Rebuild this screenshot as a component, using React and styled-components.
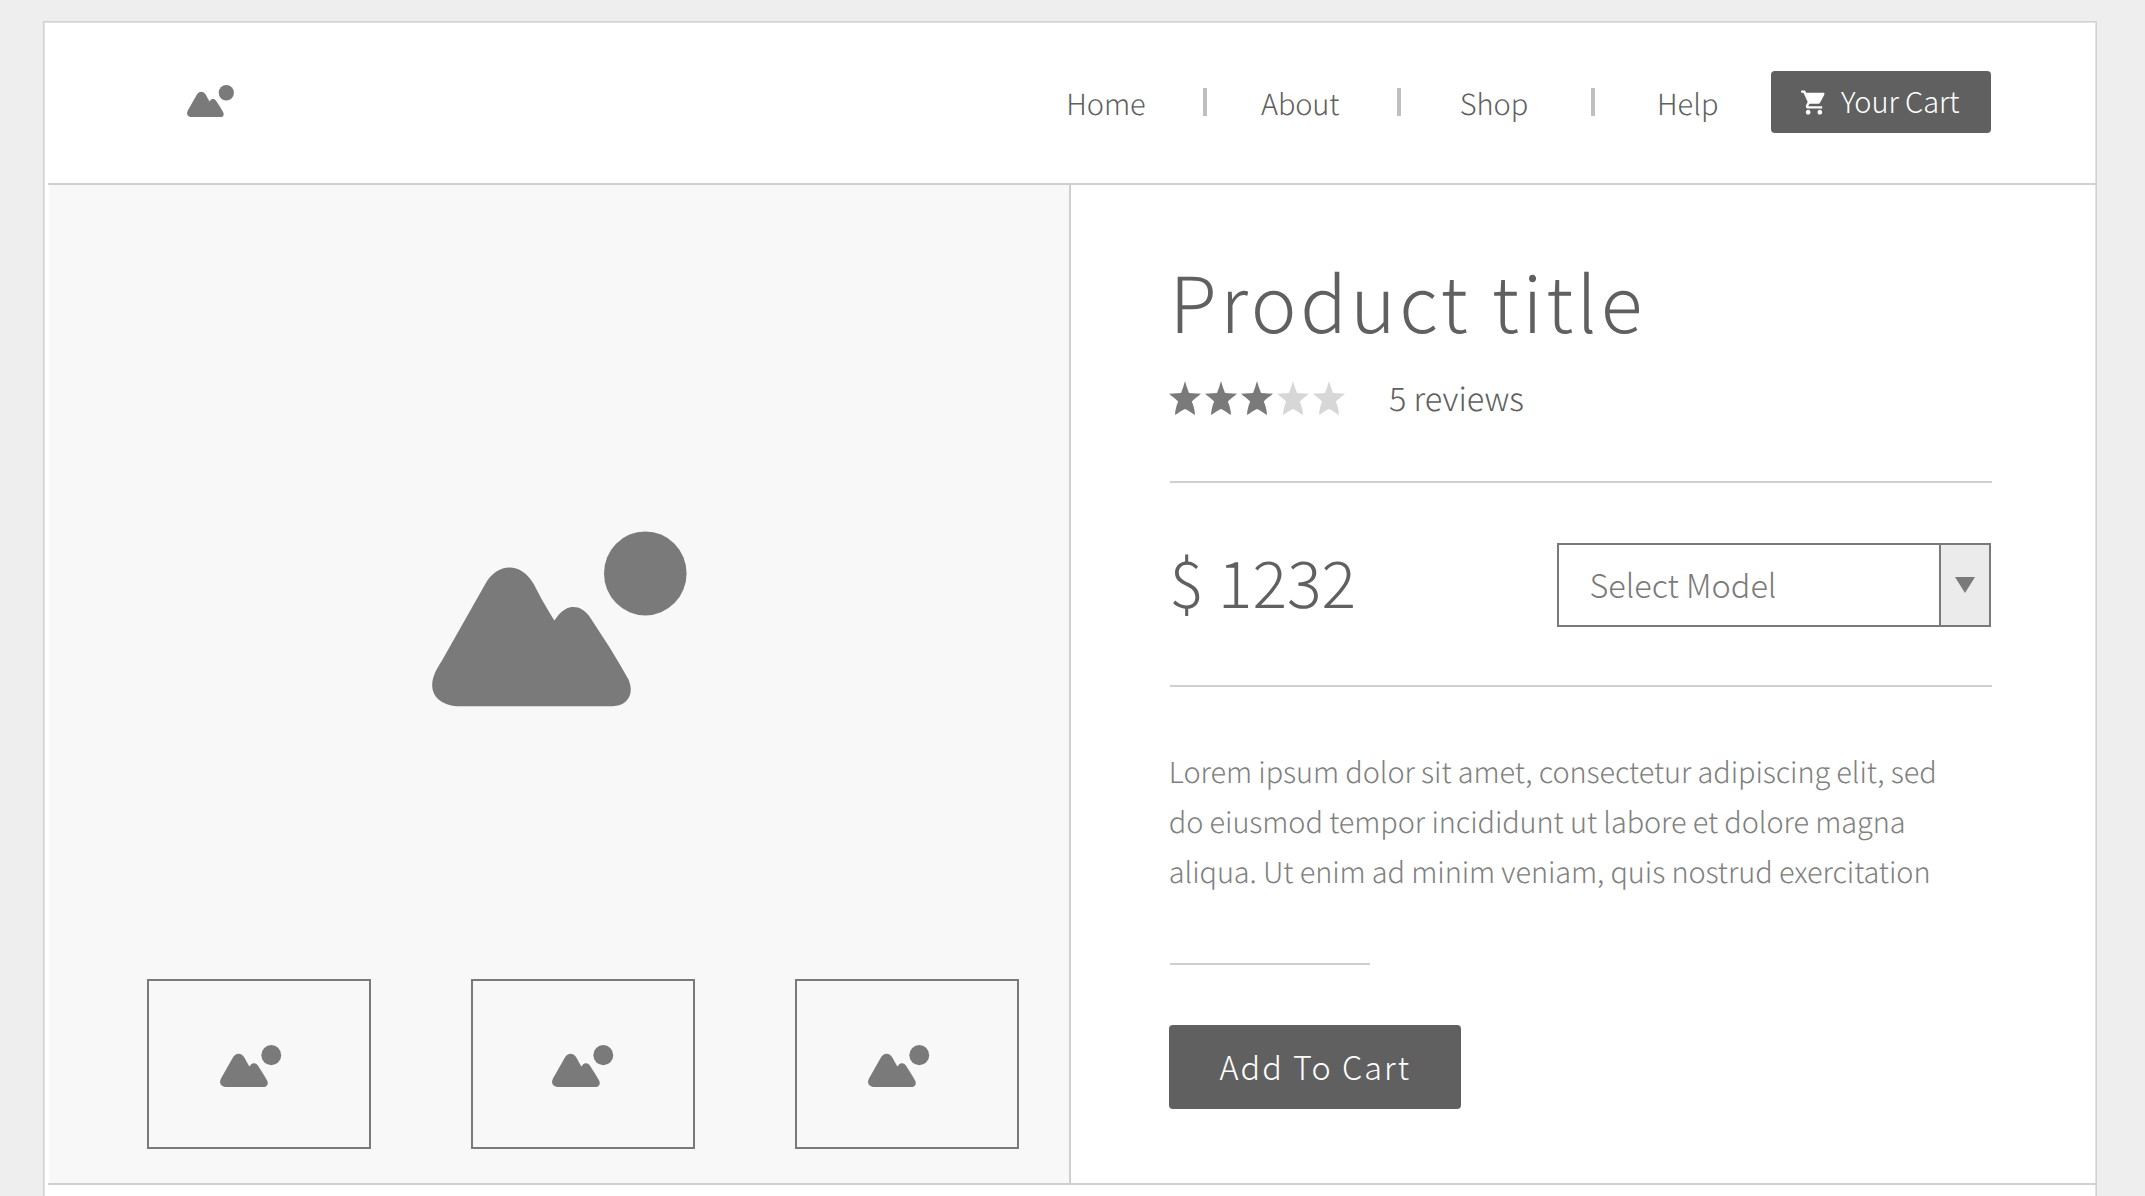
import React from "react";
import styled, { createGlobalStyle } from "styled-components";

const INK = "#606060";
const MID = "#7a7a7a";
const RULE = "#cfcfcf";

const GlobalStyle = createGlobalStyle`
  *, *::before, *::after { box-sizing: border-box; }
  html, body { margin: 0; padding: 0; }
  body {
    height: 1196px;
    overflow: hidden;
    background: #eeeeee;
    color: ${INK};
    font-family: "Noto Sans CJK SC", "Open Sans", sans-serif;
    font-weight: 300;
    text-rendering: geometricPrecision;
  }
  h1, p { margin: 0; font-weight: 300; }
  button {
    font: inherit;
    border: 0;
    padding: 0;
    cursor: pointer;
  }
`;

const Page = styled.div`
  height: 1196px;
  padding: 21px 48px 0 43px;
  overflow: hidden;
`;

const Sheet = styled.div`
  height: 1240px;
  padding-left: 4px;
  background: #fff;
  border: 1px solid #d1d1d1;
  box-shadow: inset 1px 1px 0 #e2e2e2, inset -1px 0 0 #e2e2e2;
`;

const Header = styled.header`
  display: flex;
  align-items: flex-start;
  height: 163px;
  padding: 0 105px 0 139.4px;
  border-bottom: 2px solid ${RULE};
`;

const Logo = styled.a`
  display: flex;
  padding-top: 62.6px;
  margin-right: auto;
`;

const Nav = styled.nav`
  display: flex;
  align-items: flex-start;
  padding-top: 66px;
`;

const NavLink = styled.a`
  width: ${(p) => p.$width}px;
  margin-top: 1px;
  font-size: 29px;
  line-height: 28px;
  letter-spacing: ${(p) => p.$track}px;
  white-space: nowrap;
`;

const NavDivider = styled.span`
  width: 4px;
  height: 28px;
  margin-right: ${(p) => p.$after}px;
  background: #bfbfbf;
`;

const CartButton = styled.button`
  display: flex;
  align-items: center;
  width: 220px;
  height: 62px;
  margin-top: 49px;
  padding-left: 29px;
  border-radius: 4px;
  background: ${INK};
  color: #fff;
  font-size: 29px;
  line-height: 58px;
  letter-spacing: -0.1px;
`;

const CartLabel = styled.span`
  height: 62px;
  margin-left: 13px;
  white-space: nowrap;
`;

const Product = styled.main`
  display: flex;
  height: 1000px;
  border-bottom: 2px solid ${RULE};
`;

const Gallery = styled.section`
  display: flex;
  flex-direction: column;
  width: 1022px;
  margin-left: 1px;
  padding: 346px 50px 34px 98px;
  background: #f8f8f8;
  border-right: 2px solid ${RULE};
`;

const Hero = styled.div`
  display: flex;
  flex: 1;
  align-items: flex-start;
  padding-left: 284.5px;
`;

const Thumbs = styled.div`
  display: flex;
  gap: 100px;
`;

const Thumb = styled.button`
  display: flex;
  flex: none;
  align-items: flex-start;
  width: 224px;
  height: 170px;
  padding: 63.6px 0 0 ${(p) => p.$inset}px;
  border: 2px solid ${MID};
  background: transparent;
`;

const Details = styled.section`
  display: flex;
  flex-direction: column;
  align-items: flex-start;
  width: 822px;
  margin-left: 98px;
  padding-top: 65px;
`;

const Title = styled.h1`
  padding-left: 0.6px;
  font-size: 77.2px;
  line-height: 100px;
  letter-spacing: 3.53px;
  white-space: nowrap;
`;

const Rating = styled.div`
  display: flex;
  align-items: flex-start;
  height: 131px;
  padding-top: 31px;
`;

const Stars = styled.span`
  display: flex;
  gap: 4px;
  width: 220px;
`;

const Reviews = styled.a`
  font-size: 32.4px;
  line-height: 34px;
  white-space: nowrap;
`;

const Rule = styled.hr`
  flex: none;
  width: ${(p) => p.$width}px;
  height: 2px;
  margin: 0 0 0 1px;
  border: 0;
  background: ${RULE};
`;

const Purchase = styled.div`
  display: flex;
  align-items: center;
  justify-content: space-between;
  width: 822px;
  height: 202px;
  padding-top: 2px;
`;

const Price = styled.span`
  margin-top: -10px;
  font-size: 64.6px;
  line-height: 84px;
  white-space: nowrap;
`;

const Select = styled.button`
  display: flex;
  width: 434px;
  height: 84px;
  border: 2px solid ${MID};
  background: #fff;
  color: ${MID};
  font-size: 32.4px;
  line-height: 77px;
  text-align: left;
`;

const SelectValue = styled.span`
  flex: 1;
  padding-left: 30.5px;
`;

const SelectArrow = styled.span`
  display: flex;
  justify-content: center;
  width: 50px;
  height: 80px;
  padding-top: 32px;
  border-left: 2px solid ${MID};
  background: #ebebeb;
`;

const Description = styled.p`
  height: 276px;
  padding-top: 59px;
  margin-left: -0.2px;
  color: #808080;
  font-size: 28.9px;
  line-height: 50px;
  letter-spacing: -0.08px;
  white-space: nowrap;
`;

const AddButton = styled.button`
  width: 292px;
  height: 84px;
  margin-top: 60px;
  padding-left: 50.5px;
  border-radius: 4px;
  background: ${INK};
  color: #fff;
  font-size: 32.4px;
  line-height: 82px;
  letter-spacing: 2px;
  text-align: left;
  white-space: nowrap;

  > span {
    display: block;
    height: 84px;
  }
`;

const Picture = ({ width }) => (
  <svg width={width} height={(width * 175.6) / 255} viewBox="0 0 255 175.6" fill={MID}>
    <path transform="translate(0 0.5)" d="M53 53 C65 31 89 30 102 53 C109 67 115 77 122.300 89 L126.500 83.500 C136 72 149 73 157.500 85 C172 107 185 127 196.500 148 C203 163 195 174.700 180.500 174.700 L25 174.700 C5 173 -4 160 2 144 C4 138 7 134 10 129 Z" />
    <ellipse cx="213.300" cy="42.400" rx="41.300" ry="42" />
  </svg>
);

const Star = ({ filled }) => (
  <svg width="32" height="34" viewBox="0 0 32 34" fill={filled ? MID : "#d7d7d7"}>
    <path d="M16 0 C17 4 18.500 8 20 12 L32 12.700 C29 15.500 25.500 17.500 22.800 20.500 C24.500 24.500 25.800 29 26 34 C22.500 32 19.500 29.500 16 28 C12.500 29.500 9.500 32 6 34 C6.200 29 7.500 24.500 9.200 20.500 C6.500 17.500 3 15.500 0 12.700 L12 12 C13.500 8 15 4 16 0 Z" />
  </svg>
);

const CartIcon = () => (
  <svg width="28" height="29" viewBox="0 0 24 24" preserveAspectRatio="none" fill="#fff">
    <path d="M7 18c-1.100 0-1.990.9-1.990 2S5.900 22 7 22s2-.9 2-2-.9-2-2-2zM1 2v2h2l3.600 7.590-1.350 2.450c-.16.28-.25.61-.25.96 0 1.100.9 2 2 2h12v-2H7.420c-.14 0-.25-.11-.25-.25l.03-.12.9-1.630h7.450c.75 0 1.410-.41 1.750-1.030l3.580-6.490c.08-.14.12-.31.12-.48 0-.55-.45-1-1-1H5.210l-.94-2H1zm16 16c-1.100 0-1.990.9-1.990 2s.89 2 1.990 2 2-.9 2-2-.9-2-2-2z" />
  </svg>
);

const thumbs = [71.4, 79.4, 71.3];
const rating = 3;

export default function App() {
  return (
    <>
      <GlobalStyle />
      <Page>
        <Sheet>
          <Header>
            <Logo><Picture width={47} /></Logo>
            <Nav>
              <NavLink $width={136.8} $track={-0.05}>Home</NavLink>
              <NavDivider $after={54} />
              <NavLink $width={136} $track={-0.15}>About</NavLink>
              <NavDivider $after={58.7} />
              <NavLink $width={131.3} $track={0}>Shop</NavLink>
              <NavDivider $after={62} />
              <NavLink $width={114} $track={0}>Help</NavLink>
            </Nav>
            <CartButton>
              <CartIcon />
              <CartLabel>Your Cart</CartLabel>
            </CartButton>
          </Header>
          <Product>
            <Gallery>
              <Hero><Picture width={255} /></Hero>
              <Thumbs>
                {thumbs.map((inset) => (
                  <Thumb key={inset} $inset={inset}><Picture width={61.3} /></Thumb>
                ))}
              </Thumbs>
            </Gallery>
            <Details>
              <Title>Product title</Title>
              <Rating>
                <Stars>
                  {[1, 2, 3, 4, 5].map((n) => <Star key={n} filled={n <= rating} />)}
                </Stars>
                <Reviews>5 reviews</Reviews>
              </Rating>
              <Rule $width={822} />
              <Purchase>
                <Price>$ 1232</Price>
                <Select>
                  <SelectValue>Select Model</SelectValue>
                  <SelectArrow>
                    <svg width="20" height="16" viewBox="0 0 20 16" fill={MID}>
                      <path d="M0 0H20L10 16Z" />
                    </svg>
                  </SelectArrow>
                </Select>
              </Purchase>
              <Rule $width={822} />
              <Description>
                Lorem ipsum dolor sit amet, consectetur adipiscing elit, sed<br />
                do eiusmod tempor incididunt ut labore et dolore magna<br />
                aliqua. Ut enim ad minim veniam, quis nostrud exercitation
              </Description>
              <Rule $width={200} />
              <AddButton><span>Add To Cart</span></AddButton>
            </Details>
          </Product>
        </Sheet>
      </Page>
    </>
  );
}
